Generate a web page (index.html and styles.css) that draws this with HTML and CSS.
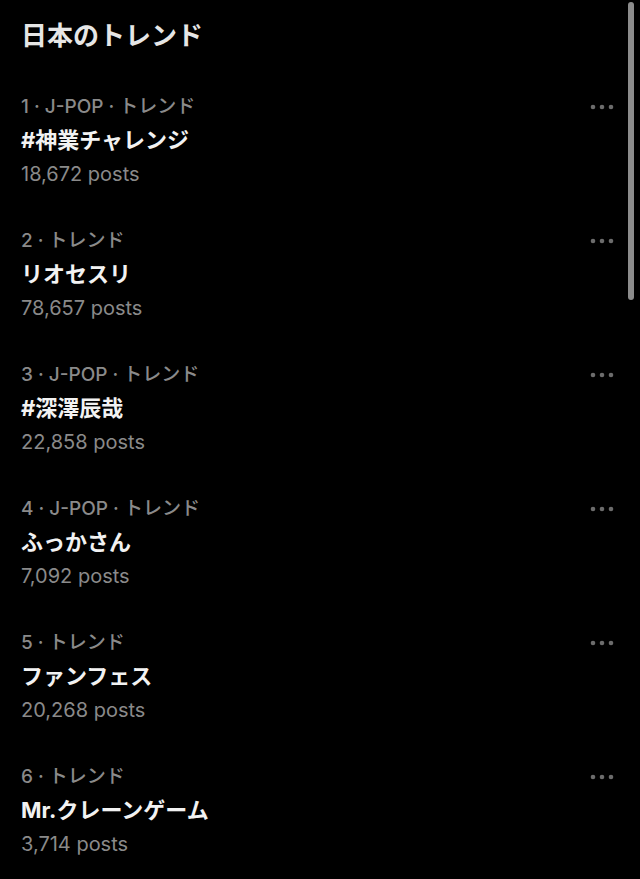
FILE: index.html
```html
<!DOCTYPE html>
<html lang="ja">
  <head>
    <meta charset="UTF-8" />
    <meta name="viewport" content="width=device-width, initial-scale=1.0" />
    <link rel="stylesheet" href="styles.css">
  </head>
  <body>
    <div class="page">
      <h1 class="heading">日本のトレンド</h1>

      <ul class="trends">
        <li class="trend">
          <div class="trend-body">
            <p class="trend-meta">1 · J-POP · トレンド</p>
            <p class="trend-name">#神業チャレンジ</p>
            <p class="trend-count">18,672 posts</p>
          </div>
          <span class="more">
            <svg viewBox="0 0 24 10" width="24" height="10"><circle cx="3" cy="5" r="2.3" /><circle cx="12" cy="5" r="2.3" /><circle cx="21" cy="5" r="2.3" /></svg>
          </span>
        </li>
        <li class="trend">
          <div class="trend-body">
            <p class="trend-meta">2 · トレンド</p>
            <p class="trend-name">リオセスリ</p>
            <p class="trend-count">78,657 posts</p>
          </div>
          <span class="more">
            <svg viewBox="0 0 24 10" width="24" height="10"><circle cx="3" cy="5" r="2.3" /><circle cx="12" cy="5" r="2.3" /><circle cx="21" cy="5" r="2.3" /></svg>
          </span>
        </li>
        <li class="trend">
          <div class="trend-body">
            <p class="trend-meta">3 · J-POP · トレンド</p>
            <p class="trend-name">#深澤辰哉</p>
            <p class="trend-count">22,858 posts</p>
          </div>
          <span class="more">
            <svg viewBox="0 0 24 10" width="24" height="10"><circle cx="3" cy="5" r="2.3" /><circle cx="12" cy="5" r="2.3" /><circle cx="21" cy="5" r="2.3" /></svg>
          </span>
        </li>
        <li class="trend">
          <div class="trend-body">
            <p class="trend-meta">4 · J-POP · トレンド</p>
            <p class="trend-name">ふっかさん</p>
            <p class="trend-count">7,092 posts</p>
          </div>
          <span class="more">
            <svg viewBox="0 0 24 10" width="24" height="10"><circle cx="3" cy="5" r="2.3" /><circle cx="12" cy="5" r="2.3" /><circle cx="21" cy="5" r="2.3" /></svg>
          </span>
        </li>
        <li class="trend">
          <div class="trend-body">
            <p class="trend-meta">5 · トレンド</p>
            <p class="trend-name">ファンフェス</p>
            <p class="trend-count">20,268 posts</p>
          </div>
          <span class="more">
            <svg viewBox="0 0 24 10" width="24" height="10"><circle cx="3" cy="5" r="2.3" /><circle cx="12" cy="5" r="2.3" /><circle cx="21" cy="5" r="2.3" /></svg>
          </span>
        </li>
        <li class="trend">
          <div class="trend-body">
            <p class="trend-meta">6 · トレンド</p>
            <p class="trend-name">Mr.クレーンゲーム</p>
            <p class="trend-count">3,714 posts</p>
          </div>
          <span class="more">
            <svg viewBox="0 0 24 10" width="24" height="10"><circle cx="3" cy="5" r="2.3" /><circle cx="12" cy="5" r="2.3" /><circle cx="21" cy="5" r="2.3" /></svg>
          </span>
        </li>
      </ul>
    </div>

    <div class="scrollbar"></div>
  </body>
</html>
```

FILE: styles.css
```css
* {
  margin: 0;
  padding: 0;
  box-sizing: border-box;
}
html,
body {
  background: #000;
}
body {
  font-family: Inter, "Noto Sans CJK JP", sans-serif;
  color: #ececec;
  overflow: hidden;
}
.page {
  padding: 18px 26px 0 21px;
}
.heading {
  font-size: 26px;
  line-height: 36px;
  font-weight: 700;
  color: #e6e6e6;
  margin-bottom: 20px;
}
.trends {
  list-style: none;
}
.trend {
  display: flex;
  align-items: flex-start;
  padding: 18px 0;
}
.trend-body {
  flex: 1;
}
.trend-meta {
  font-size: 19px;
  line-height: 30px;
  font-weight: 500;
  color: #8a8a8a;
}
.trend-name {
  font-size: 22px;
  line-height: 36px;
  font-weight: 700;
  color: #f2f2f2;
}
.trend-count {
  font-size: 20px;
  line-height: 32px;
  color: #8a8a8a;
}
.more {
  display: flex;
  align-items: center;
  height: 30px;
  fill: #6c6c6c;
}
.scrollbar {
  position: fixed;
  top: 2px;
  right: 6px;
  width: 6px;
  height: 298px;
  border-radius: 3px;
  background: #8c8c8c;
}
```
